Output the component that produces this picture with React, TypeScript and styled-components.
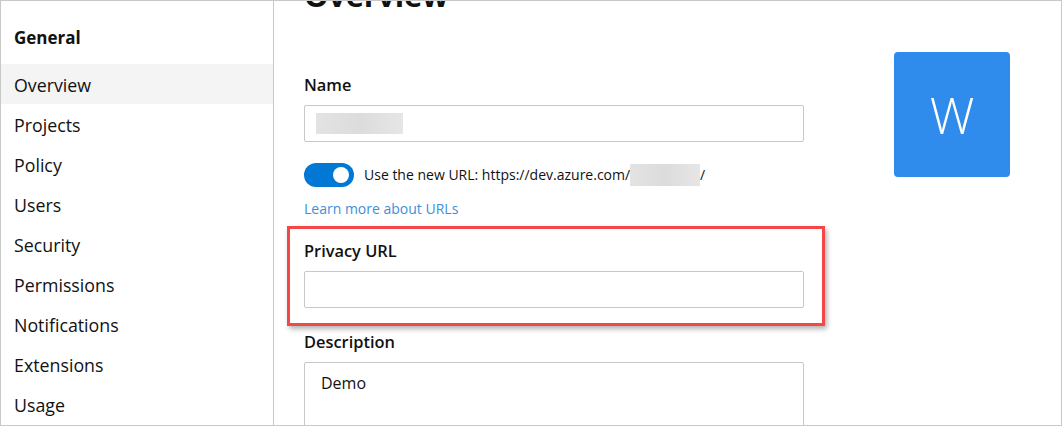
import React from "react";
import styled, { createGlobalStyle } from "styled-components";

const Global = createGlobalStyle`
  html, body { margin: 0; padding: 0; background: #fff; }
  body { font-family: "Open Sans", "Noto Sans", sans-serif; color: #111; }
  * { box-sizing: border-box; }
`;

const Frame = styled.div`
  width: 1062px;
  height: 426px;
  border: 1px solid #c8c8c8;
  display: flex;
  overflow: hidden;
  background: #fff;
`;

const Sidebar = styled.nav`
  width: 273px;
  flex: none;
  border-right: 1px solid #c8c8c8;
  padding-top: 24px;
  display: flex;
  flex-direction: column;
`;

const GroupTitle = styled.div`
  font-size: 17px;
  font-weight: 700;
  line-height: 26px;
  padding-left: 13px;
  margin-bottom: 13px;
`;

const NavItem = styled.div<{ $active?: boolean }>`
  height: 40px;
  flex: none;
  display: flex;
  align-items: center;
  padding: 2px 0 0 13px;
  font-size: 17.8px;
  color: #111;
  background: ${(p) => (p.$active ? "#f4f4f4" : "transparent")};
`;

const Main = styled.main`
  flex: 1;
  display: flex;
  padding-left: 30px;
  gap: 90px;
`;

const Form = styled.div`
  width: 500px;
  flex: none;
  display: flex;
  flex-direction: column;
`;

const Heading = styled.h1`
  margin: -24px 0 0;
  font-size: 31px;
  line-height: 36px;
  font-weight: 700;
  letter-spacing: -0.3px;
`;

const Field = styled.div<{ $top: number }>`
  position: relative;
  margin-top: ${(p) => p.$top}px;
  display: flex;
  flex-direction: column;
`;

const Label = styled.div`
  font-size: 16.4px;
  font-weight: 600;
  line-height: 20px;
  height: 20px;
  margin-bottom: 10px;
`;

const Input = styled.div<{ $tall?: boolean }>`
  height: ${(p) => (p.$tall ? "110px" : "37px")};
  flex: none;
  border: 1px solid #c8c8c8;
  border-radius: 2px;
  display: flex;
  align-items: ${(p) => (p.$tall ? "flex-start" : "center")};
  padding: ${(p) => (p.$tall ? "9px 16px" : "0 11px")};
  font-size: 16px;
  line-height: 22px;
`;

const Redacted = styled.span<{ $w: number; $h: number }>`
  display: inline-block;
  width: ${(p) => p.$w}px;
  height: ${(p) => p.$h}px;
  background: linear-gradient(90deg, #e3e3e3, #dcdcdc 50%, #e6e6e6);
  filter: blur(0.6px);
  vertical-align: middle;
`;

const ToggleRow = styled.div`
  margin-top: 21px;
  display: flex;
  align-items: center;
  gap: 10px;
  font-size: 14px;
  line-height: 20px;
`;

const Toggle = styled.div`
  width: 50px;
  height: 24px;
  border-radius: 12px;
  background: #0078d4;
  position: relative;
  flex: none;
  &::after {
    content: "";
    position: absolute;
    top: 4px;
    right: 5px;
    width: 16px;
    height: 16px;
    border-radius: 50%;
    background: #fff;
  }
`;

const UrlText = styled.span`
  display: flex;
  align-items: center;
`;

const Link = styled.a`
  margin-top: 12px;
  font-size: 14px;
  line-height: 20px;
  color: #3c8fdb;
  text-decoration: none;
`;

const Highlight = styled.div`
  position: absolute;
  left: -17px;
  right: -21px;
  top: -15px;
  height: 100px;
  border: 3px solid #f44848;
  box-shadow: 2px 3px 5px rgba(0, 0, 0, 0.3);
  pointer-events: none;
`;

const Avatar = styled.div`
  margin-top: 51px;
  width: 116px;
  height: 125px;
  border-radius: 4px;
  background: #2f8bec;
  color: #fff;
  display: flex;
  align-items: center;
  justify-content: center;
  font-size: 50px;
  font-weight: 300;
  flex: none;
`;

const navItems = [
  "Overview",
  "Projects",
  "Policy",
  "Users",
  "Security",
  "Permissions",
  "Notifications",
  "Extensions",
  "Usage",
];

export default function App() {
  return (
    <>
      <Global />
      <Frame>
        <Sidebar>
          <GroupTitle>General</GroupTitle>
          {navItems.map((n, i) => (
            <NavItem key={n} $active={i === 0}>
              {n}
            </NavItem>
          ))}
        </Sidebar>
        <Main>
          <Form>
            <Heading>Overview</Heading>
            <Field $top={62}>
              <Label>Name</Label>
              <Input>
                <Redacted $w={87} $h={21} />
              </Input>
            </Field>
            <ToggleRow>
              <Toggle />
              <UrlText>
                Use the new URL: https://dev.azure.com/
                <Redacted $w={70} $h={22} />/
              </UrlText>
            </ToggleRow>
            <Link>Learn more about URLs</Link>
            <Field $top={22}>
              <Highlight />
              <Label>Privacy URL</Label>
              <Input />
            </Field>
            <Field $top={24}>
              <Label>Description</Label>
              <Input $tall>Demo</Input>
            </Field>
          </Form>
          <Avatar>W</Avatar>
        </Main>
      </Frame>
    </>
  );
}
